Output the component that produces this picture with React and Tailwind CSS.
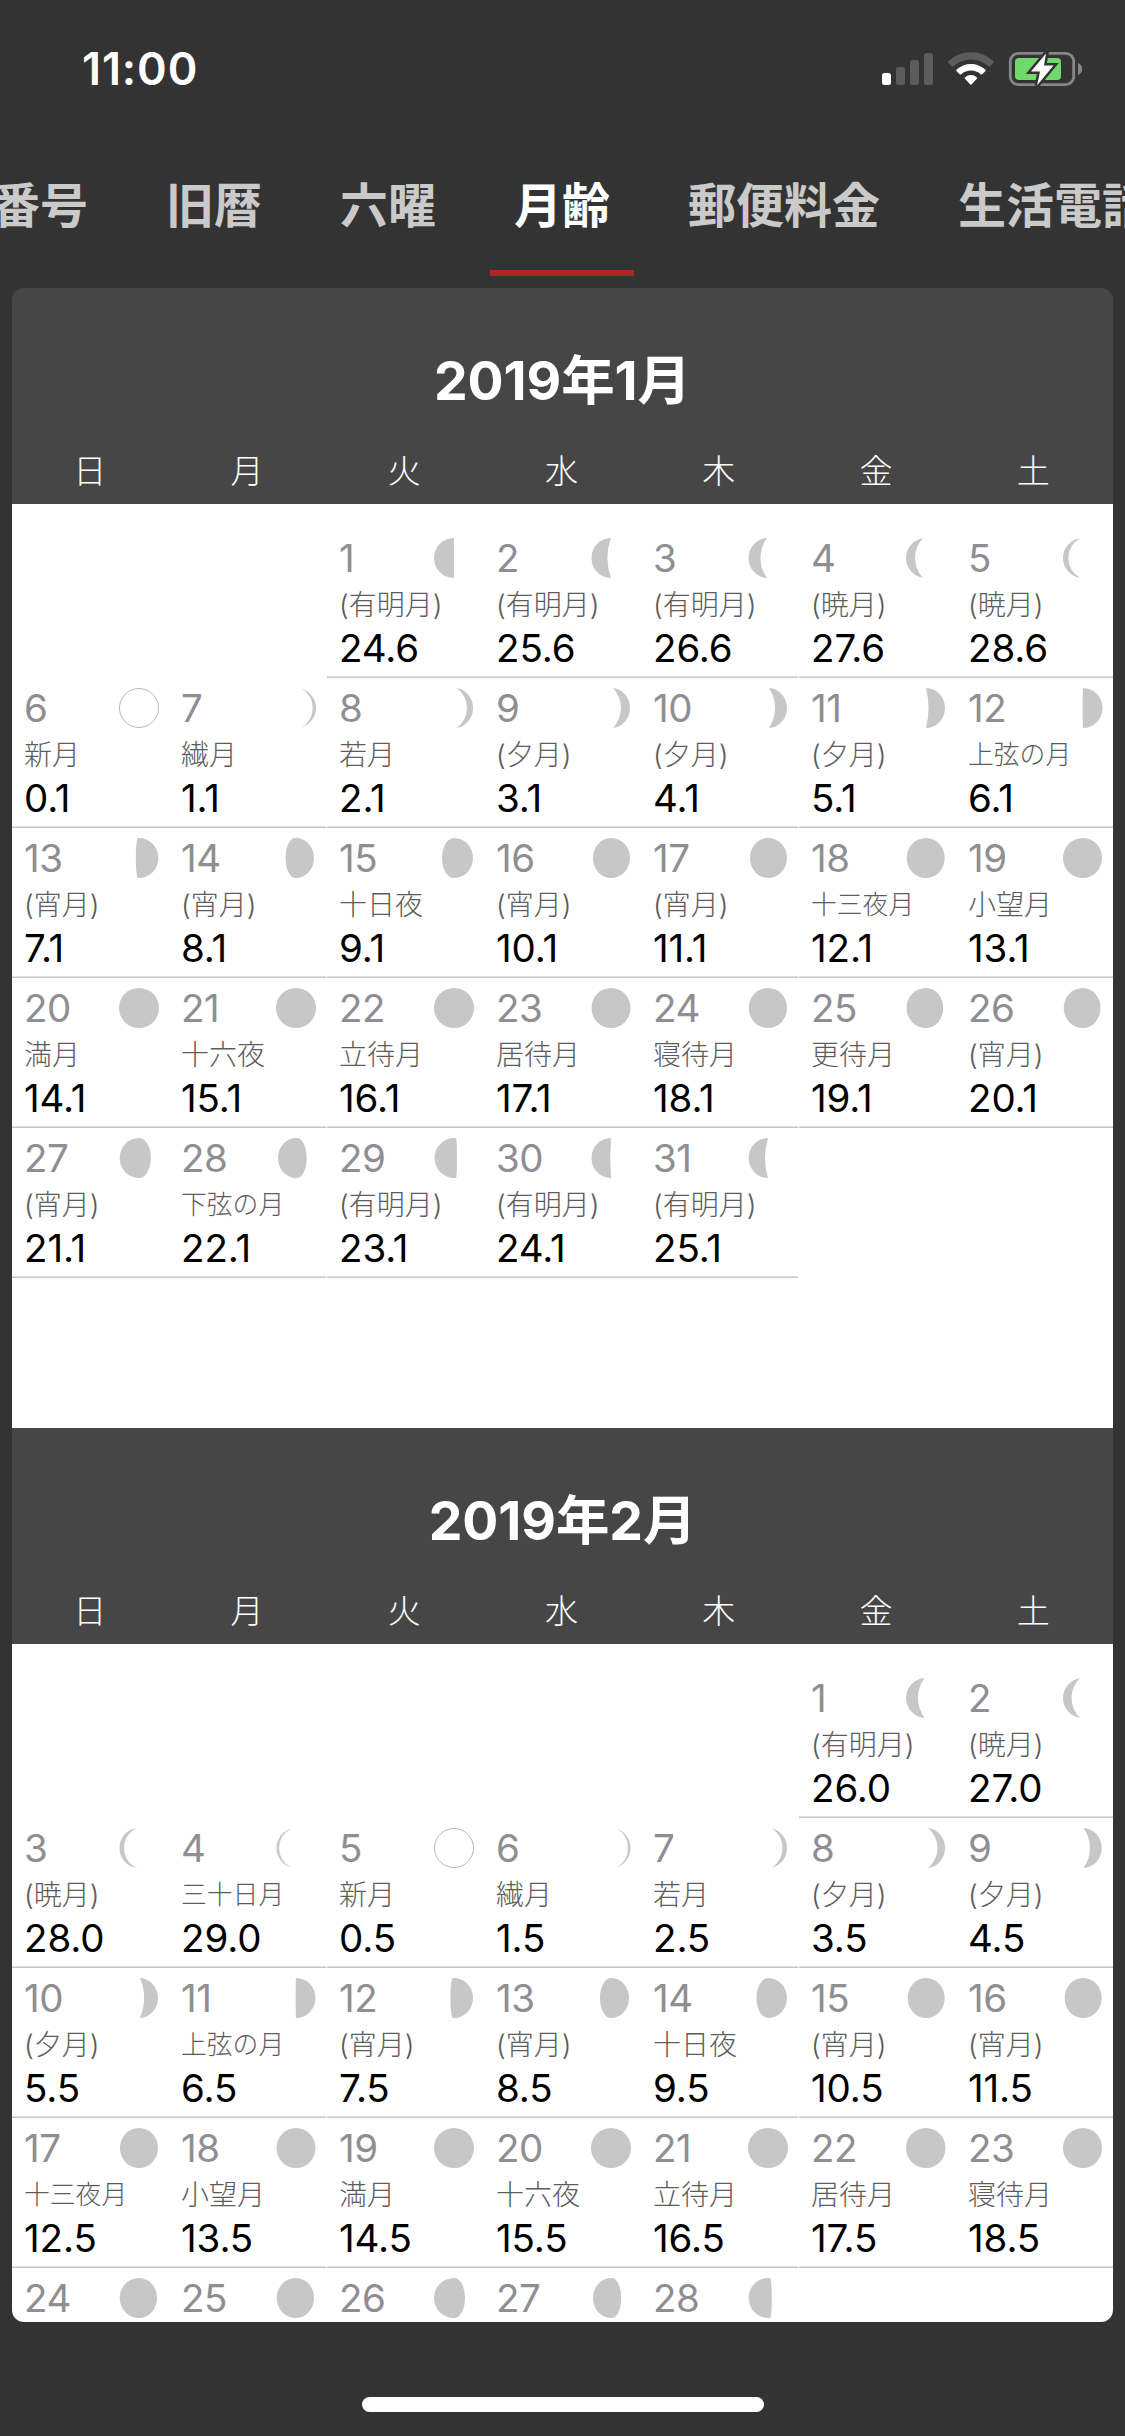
const WEEKDAYS = ["日", "月", "火", "水", "木", "金", "土"];

// moon: [outer edge, horn position, terminator], in pixels from the disc's centre.
const JANUARY = [
  [1, "(有明月)", "24.6", [-20, 0, 0]],
  [2, "(有明月)", "25.6", [-19.5, 0, -3.5]],
  [3, "(有明月)", "26.6", [-19.5, -1, -7.5]],
  [4, "(暁月)", "27.6", [-20, -3, -11]],
  [5, "(暁月)", "28.6", [-20, -3, -14.7]],
  [6, "新月", "0.1", null],
  [7, "繊月", "1.1", [20, 5.4, 16.7]],
  [8, "若月", "2.1", [19, 3, 13]],
  [9, "(夕月)", "3.1", [19, 2, 10]],
  [10, "(夕月)", "4.1", [19, 1, 7]],
  [11, "(夕月)", "5.1", [19, 0, 2.5]],
  [12, "上弦の月", "6.1", [19.5, 0, -0.3]],
  [13, "(宵月)", "7.1", [19.4, -1, -3.2]],
  [14, "(宵月)", "8.1", [18, -1, -10.4]],
  [15, "十日夜", "9.1", [19, 0, -12]],
  [16, "(宵月)", "10.1", [19, 0, -18]],
  [17, "(宵月)", "11.1", [19, 0, -18]],
  [18, "十三夜月", "12.1", [18.7, 0, -19.3]],
  [19, "小望月", "13.1", [19, 0, -20]],
  [20, "満月", "14.1", [20, 0, -20]],
  [21, "十六夜", "15.1", [20, 0, -20]],
  [22, "立待月", "16.1", [20, 0, -20]],
  [23, "居待月", "17.1", [-19.5, 0, 19.5]],
  [24, "寝待月", "18.1", [-19.3, 0, 19]],
  [25, "更待月", "19.1", [-19.5, 0, 17.2]],
  [26, "(宵月)", "20.1", [-19.3, 0, 17.4]],
  [27, "(宵月)", "21.1", [-19.3, 0, 11.8]],
  [28, "下弦の月", "22.1", [-18, 1, 10.7]],
  [29, "(有明月)", "23.1", [-19.4, 2, 3]],
  [30, "(有明月)", "24.1", [-19.5, 0, -0.8]],
  [31, "(有明月)", "25.1", [-19.3, 0, -3]],
];

const FEBRUARY = [
  [1, "(有明月)", "26.0", [-20, -1.5, -8]],
  [2, "(暁月)", "27.0", [-20, -3, -11.5]],
  [3, "(暁月)", "28.0", [-19.5, -2, -15]],
  [4, "三十日月", "29.0", [-19.5, -5, -17]],
  [5, "新月", "0.5", null],
  [6, "繊月", "1.5", [19.5, 6, 17]],
  [7, "若月", "2.5", [19, 4, 14.5]],
  [8, "(夕月)", "3.5", [19, 2, 11.5]],
  [9, "(夕月)", "4.5", [18.8, 0.5, 7]],
  [10, "(夕月)", "5.5", [19, 1, 5]],
  [11, "上弦の月", "6.5", [19.5, 0, -0.3]],
  [12, "(宵月)", "7.5", [19, -1, -3.6]],
  [13, "(宵月)", "8.5", [18, 0, -11]],
  [14, "十日夜", "9.5", [19, 0, -11.5]],
  [15, "(宵月)", "10.5", [18.7, 0, -18.3]],
  [16, "(宵月)", "11.5", [18.7, 0, -18.3]],
  [17, "十三夜月", "12.5", [19, 0, -19]],
  [18, "小望月", "13.5", [19.5, 0, -19.5]],
  [19, "満月", "14.5", [20, 0, -20]],
  [20, "十六夜", "15.5", [20, 0, -20]],
  [21, "立待月", "16.5", [20, 0, -20]],
  [22, "居待月", "17.5", [-20, 0, 19.5]],
  [23, "寝待月", "18.5", [-20, 0, 19]],
  [24, "更待月", "19.5", [-19.3, 0, 18]],
  [25, "(宵月)", "20.5", [-19.3, 0, 18]],
  [26, "(宵月)", "21.5", [-20, 0, 11]],
  [27, "下弦の月", "22.5", [-18, 1, 10.2]],
  [28, "(有明月)", "23.5", [-19.3, 2, 3.8]],
];

const MONTHS = [
  { title: "2019年1月", offset: 2, days: JANUARY },
  { title: "2019年2月", offset: 5, days: FEBRUARY },
];

const TABS = ["郵便番号", "旧暦", "六曜", "月齢", "郵便料金", "生活電話"];

function Moon({ phase }) {
  let shape;
  if (!phase) {
    shape = <circle r="19.5" fill="none" stroke="#b8b8b8" strokeWidth="1" />;
  } else {
    const [outer, horn, term] = phase;
    const y = 20 * Math.sqrt(1 - (horn / outer) ** 2);
    const right = outer > 0;
    const large = right ? horn < 0 : horn > 0;
    const innerSweep = term > horn ? 0 : 1;
    const depth = Math.max(Math.abs(term - horn), 0.05);
    // Crescents have a circular inner edge; gibbous discs an elliptical one.
    const crescent = (term - horn) * outer > 0;
    const radius = (depth * depth + y * y) / (2 * depth);
    const rx = crescent ? radius : depth;
    const ry = crescent ? radius : y;
    shape = (
      <path
        fill="#c7c7c7"
        d={`M${horn} ${-y}A${Math.abs(outer)} 20 0 ${large ? 1 : 0} ${right ? 1 : 0} ${horn} ${y}A${rx} ${ry} 0 0 ${innerSweep} ${horn} ${-y}Z`}
      />
    );
  }
  return (
    <svg className="mt-[10px] h-10 w-10 shrink-0" viewBox="-20 -20 40 40">
      {shape}
    </svg>
  );
}

function Day({ day }) {
  const [number, name, age, phase] = day;
  return (
    <div className="flex h-[150px] flex-col pl-3">
      <div className="flex h-[59px] justify-between pr-[10px]">
        <span className="pt-[6px] text-[38.5px] leading-[48px] tracking-[-0.5px] text-[#8e8e93]">{number}</span>
        <Moon phase={phase} />
      </div>
      <div
        className={
          name.length === 4 && name[0] !== "("
            ? "h-[37px] whitespace-nowrap text-[25.8px] font-light leading-[36px] text-[#5c5c5c]"
            : "h-[37px] whitespace-nowrap text-[28px] font-light leading-[36px] text-[#5c5c5c]"
        }
      >
        {name}
      </div>
      <div className="text-[38.5px] leading-[48px] tracking-[-0.1px] text-black">{age}</div>
      <div className="-ml-3 mt-auto h-[2px] border-t border-[#e0e0e0] bg-[#c7c7c7]" />
    </div>
  );
}

function Month({ month }) {
  const cells = Array.from({ length: 42 }, (_, i) => month.days[i - month.offset] ?? null);
  return (
    <section>
      <header className="flex h-[216px] flex-col bg-[#464646] text-white">
        <h2 className="pt-[49px] text-center text-[53.5px] font-bold leading-[88px] tracking-[-0.1px]">{month.title}</h2>
        <div className="-ml-px mr-px mt-[22px] grid grid-cols-7 text-center text-[33px] font-light leading-[48px]">
          {WEEKDAYS.map((d) => (
            <span key={d}>{d}</span>
          ))}
        </div>
      </header>
      <div className="grid auto-rows-[150px] grid-cols-[157px_158px_157px_157px_158px_157px_157px] bg-white pt-6">
        {cells.map((day, i) => (
          <div key={i} className={i % 7 === 1 || i % 7 === 4 ? "pr-px" : ""}>
            {day && <Day day={day} />}
          </div>
        ))}
      </div>
    </section>
  );
}

function StatusBar() {
  return (
    <div className="flex h-[132px] items-start justify-between pl-[82px] pr-[43px] text-white">
      <span className="pt-[39px] text-[45px] font-semibold leading-[60px] tracking-[0.9px]">11:00</span>
      <svg className="mt-[50px] h-[38px] w-[202px]" viewBox="880 50 202 38">
        <rect x="882" y="73" width="9" height="12" rx="2.5" fill="#fff" />
        <rect x="896" y="67" width="9" height="18" rx="2.5" fill="#5c5c5c" />
        <rect x="910" y="60" width="9" height="25" rx="2.5" fill="#5c5c5c" />
        <rect x="924" y="53" width="9" height="32" rx="2.5" fill="#5c5c5c" />
        <path d="M948.3 61.2q-.8.9.1 1.8l3.3 3.3q.8.8 1.7 0a26 26 0 0 1 35 0q.9.8 1.7 0l3.3-3.3q.9-.9.1-1.8a33 33 0 0 0-45.2 0Z" fill="#5c5c5c" />
        <path d="M956.6 69.5q-.9.9 0 1.7l3 3q.8.7 1.7 0a14.5 14.5 0 0 1 19.3 0q.9.7 1.7 0l3-3q.9-.8 0-1.7a21.3 21.3 0 0 0-28.7 0Z" fill="#fff" />
        <path d="M965 77.2q-.8.8 0 1.6l5 5.5q.9.9 1.8 0l5-5.5q.8-.8 0-1.6a9.2 9.2 0 0 0-11.8 0Z" fill="#fff" />
        <rect x="1010.3" y="53.3" width="63.4" height="31.4" rx="8" fill="none" stroke="#878787" strokeWidth="2.8" />
        <path d="M1078 63c2.7 1 4.2 3.3 4.2 6s-1.500 5-4.2 6Z" fill="#878787" />
        <rect x="1015" y="58" width="46" height="22" rx="4" fill="#6fd96c" />
        <path d="M1046 53.5L1031 71.5H1040L1037 85.5L1053.5 65.5H1044Z" fill="#fff" stroke="#333" strokeWidth="5" strokeLinejoin="miter" />
        <path d="M1046 53.5L1031 71.5H1040L1037 85.5L1053.5 65.5H1044Z" fill="#fff" />
      </svg>
    </div>
  );
}

export default function App() {
  return (
    <div className="flex h-[2436px] w-[1125px] flex-col overflow-hidden bg-[#333333] font-[Inter,'Noto_Sans_CJK_JP',sans-serif]">
      <StatusBar />
      <nav className="-ml-[128px] flex h-36 w-[1400px] gap-[30px] text-[48px] font-bold leading-[72px]">
        {TABS.map((tab) => (
          <div
            key={tab}
            className={
              tab === "月齢"
                ? "h-36 shrink-0 whitespace-nowrap border-b-6 border-[#ae2620] px-6 pt-[38px] text-white"
                : "h-36 shrink-0 whitespace-nowrap px-6 pt-[38px] text-[#cacaca]"
            }
          >
            {tab}
          </div>
        ))}
      </nav>
      <main className="mx-3 mt-3 h-[2034px] shrink-0 overflow-hidden rounded-xl">
        {MONTHS.map((month) => (
          <Month key={month.title} month={month} />
        ))}
      </main>
      <div className="mx-auto mt-[75px] h-[15px] w-[402px] shrink-0 rounded-full bg-white" />
    </div>
  );
}
